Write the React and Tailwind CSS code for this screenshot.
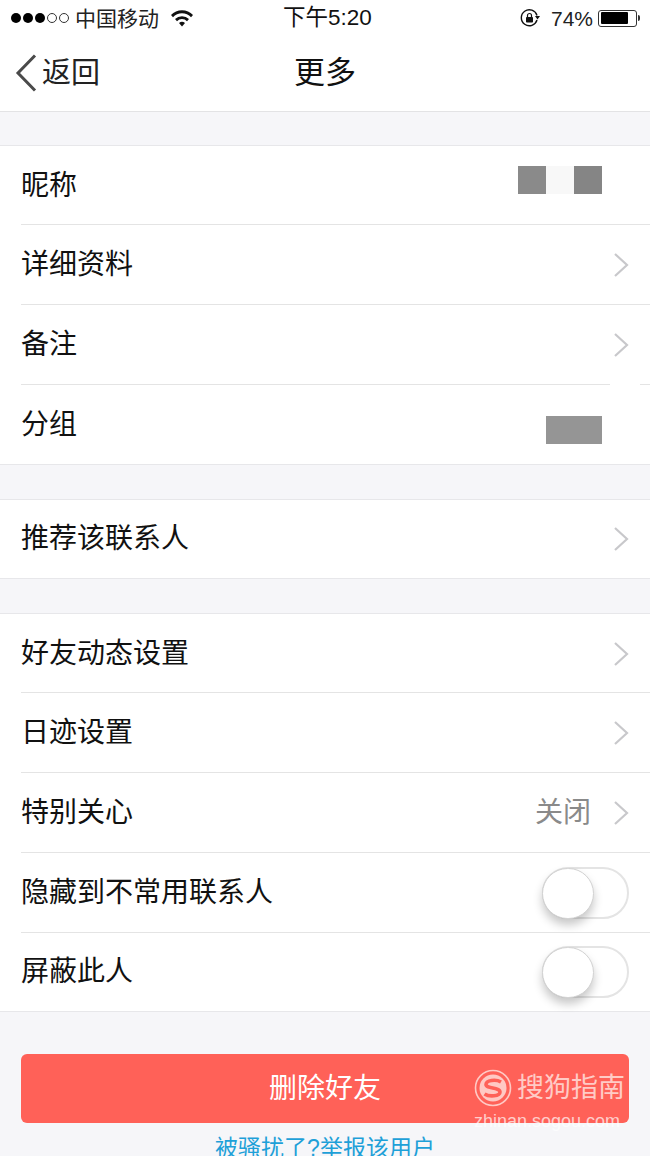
import React from "react";

const FONT = "[font-family:'Liberation_Sans','Noto_Sans_CJK_SC',sans-serif]";

function Chevron() {
  return (
    <svg width="16" height="26" viewBox="0 0 16 26" fill="none" className="block shrink-0">
      <path d="M2 2 L14 13 L2 24" stroke="#c8c8cb" strokeWidth="2.2" />
    </svg>
  );
}

function Toggle() {
  return (
    <div className="relative w-[87px] h-[52px] rounded-full border-2 border-[#e4e4e4] bg-white">
      <div className="absolute left-[-2px] top-[-1px] w-[52px] h-[51px] rounded-full bg-white border border-[#d2d2d2] shadow-[0_6px_10px_rgba(0,0,0,0.22)]" />
    </div>
  );
}

function Row({ label, right, last, h = "h-[80px]", children }) {
  return (
    <div className={"relative flex items-center justify-between px-[21px] " + h}>
      <span className="text-[28px] text-[#111] leading-none">{label}</span>
      {right}
      {!last && <div className="absolute left-[21px] right-0 bottom-0 h-px bg-[#e4e4e4]" />}
      {children}
    </div>
  );
}

function Group({ children, className = "" }) {
  return <div className={"bg-white border-y border-[#e7e7ea] " + className}>{children}</div>;
}

export default function App() {
  return (
    <div className={"relative w-[650px] h-[1156px] overflow-hidden bg-[#f6f6f9] " + FONT}>
      <div className="bg-white h-[112px] border-b border-[#e3e3e5]">
        <div className="relative h-[36px] flex items-center text-black">
          <div className="flex items-center pl-[11px] w-[260px]">
            <div className="flex items-center gap-[2px]">
              {[0, 1, 2].map((i) => (
                <span key={i} className="w-[10px] h-[10px] rounded-full bg-black" />
              ))}
              {[0, 1].map((i) => (
                <span key={i} className="w-[10px] h-[10px] rounded-full border border-[#333]" />
              ))}
            </div>
            <span className="ml-[6px] text-[21px] leading-none text-[#222]">中国移动</span>
            <svg width="24" height="18" viewBox="0 0 24 18" className="ml-[11px]">
              <path d="M1 6 A15 15 0 0 1 23 6 L21 8.2 A12 12 0 0 0 3 8.2 Z" fill="#111" />
              <path d="M5 10 A10 10 0 0 1 19 10 L17 12.2 A7 7 0 0 0 7 12.2 Z" fill="#111" />
              <path d="M9 14 A4.5 4.5 0 0 1 15 14 L12 17.5 Z" fill="#111" />
            </svg>
          </div>
          <span className="absolute left-[283px] text-[22.5px] leading-none text-[#111]">下午5:20</span>
          <div className="absolute right-[10px] flex items-center">
            <svg width="20" height="20" viewBox="0 0 20 20" className="mr-[11px]" fill="none">
              <path d="M17 12 A8 8 0 1 1 17 7.5" stroke="#111" strokeWidth="1.4" />
              <path d="M15 8 L20 8 L17.5 11.5 Z" fill="#111" />
              <rect x="6" y="9" width="7" height="5.5" rx="0.8" fill="#111" />
              <path d="M7.5 9 V7.5 A2 2 0 0 1 11.5 7.5 V9" stroke="#111" strokeWidth="1.2" />
            </svg>
            <span className="text-[21px] leading-none text-[#222]">74%</span>
            <div className="ml-[5px] w-[39px] h-[17px] border border-[#333] rounded-[3px] p-[1.5px]">
              <div className="w-[27px] h-full bg-black rounded-[1px]" />
            </div>
            <div className="ml-[1px] w-[2px] h-[6px] bg-[#333] rounded-r-full" />
          </div>
        </div>
        <div className="relative h-[75px] flex items-center justify-center">
          <div className="absolute left-[15px] top-[18px] flex items-center">
            <svg width="22" height="38" viewBox="0 0 22 38" fill="none">
              <path d="M20 1.5 L3 19 L20 36.5" stroke="#4a4a4a" strokeWidth="3" />
            </svg>
            <span className="ml-[5px] text-[29px] leading-none text-[#222]">返回</span>
          </div>
          <span className="text-[31px] leading-none text-[#111] mb-[3px]">更多</span>
        </div>
      </div>

      <Group className="mt-[33px]">
        <Row
          h="h-[79px]"
          label="昵称"
          right={
            <div className="flex h-[28px] mr-[27px] mb-[11px]">
              <div className="w-[28px] bg-[#8a8a8a]" />
              <div className="w-[28px] bg-[#f8f8f8]" />
              <div className="w-[28px] bg-[#858585]" />
            </div>
          }
        />
        <Row label="详细资料" right={<Chevron />} />
        <Row label="备注" right={<Chevron />}>
          <div className="absolute right-[10px] bottom-0 w-[30px] h-px bg-white" />
        </Row>
        <Row h="h-[79px]" label="分组" last right={<div className="w-[56px] h-[28px] bg-[#959595] mr-[27px] mt-[10px]" />} />
      </Group>

      <Group className="mt-[34px]">
        <Row label="推荐该联系人" last h="h-[78px]" right={<Chevron />} />
      </Group>

      <Group className="mt-[34px]">
        <Row h="h-[79px]" label="好友动态设置" right={<Chevron />} />
        <Row label="日迹设置" right={<Chevron />} />
        <Row
          label="特别关心"
          right={
            <div className="flex items-center gap-[22px]">
              <span className="text-[28px] leading-none text-[#8a8a8a]">关闭</span>
              <Chevron />
            </div>
          }
        />
        <Row label="隐藏到不常用联系人" right={<Toggle />} />
        <Row h="h-[78px]" label="屏蔽此人" last right={<Toggle />} />
      </Group>

      <div className="mx-[21px] mt-[42px] h-[69px] rounded-[6px] bg-[#ff6158] flex items-center justify-center">
        <span className="text-[28px] leading-none text-white">删除好友</span>
      </div>
      <div className="mt-[14px] text-center text-[23px] leading-none text-[#1ea0d8]">被骚扰了?举报该用户</div>

      <div className="absolute left-[474px] top-[1069px] w-[156px]">
        <div className="flex items-center">
          <svg width="38" height="38" viewBox="0 0 38 38" fill="none">
            <circle cx="19" cy="19" r="17.5" stroke="#ffc9c4" strokeWidth="1.6" />
            <circle cx="19" cy="19" r="13.5" fill="#ffc9c4" />
            <path d="M27 13 C22 10 12 11 12 15.5 C12 20 26 18 26 23 C26 27.5 15 28 10.5 25" stroke="#ff6158" strokeWidth="3.6" fill="none" />
          </svg>
          <span className="ml-[5px] text-[27px] leading-none text-[#ffcbc6] whitespace-nowrap">搜狗指南</span>
        </div>
        <div className="mt-[5px] text-[18px] leading-none text-white/70 whitespace-nowrap">zhinan.sogou.com</div>
      </div>
    </div>
  );
}
